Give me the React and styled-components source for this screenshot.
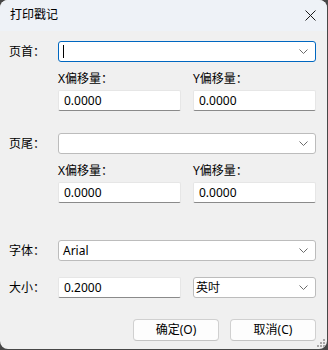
import styled, { createGlobalStyle } from "styled-components";

const GlobalStyle = createGlobalStyle`
  html, body {
    margin: 0;
    padding: 0;
    background: #474747;
  }
  body {
    font-family: "Segoe UI", "Noto Sans", "Noto Sans CJK SC", sans-serif;
    font-size: 12px;
    color: #000;
  }
`;

const Window = styled.div`
  width: 327px;
  height: 349px;
  background: #f0f0f0;
  border-radius: 8px;
  overflow: hidden;
  display: flex;
  flex-direction: column;
  position: relative;
`;

const TitleBar = styled.div`
  height: 31px;
  flex: none;
  background: #eef2f7;
  display: flex;
  align-items: center;
  justify-content: space-between;
  padding: 0 11px 1px 10px;
  box-sizing: border-box;
`;

const Title = styled.div`
  font-size: 12px;
  line-height: 16px;
`;

const Content = styled.div`
  padding: 10px 11px 0 9px;
  display: flex;
  flex-direction: column;
`;

const FieldRow = styled.div`
  display: grid;
  grid-template-columns: 49px 1fr;
  align-items: center;
  margin-top: ${(p) => p.$top || 0}px;
`;

const Label = styled.div`
  line-height: 16px;
  white-space: nowrap;
`;

const Combo = styled.div`
  height: 21px;
  box-sizing: border-box;
  background: #fff;
  border: 1px solid ${(p) => (p.$focused ? "#0067c0" : "#bcbcbc")};
  border-radius: 3px;
  display: flex;
  align-items: center;
  justify-content: space-between;
  padding: 0 7px 0 ${(p) => p.$pad ?? 3}px;
`;

const ComboText = styled.span`
  line-height: 16px;
`;

const Caret = styled.span`
  display: inline-block;
  width: 1px;
  height: 13px;
  background: #000;
  margin-left: 1px;
`;

const OffsetGrid = styled.div`
  margin-left: 49px;
  display: grid;
  grid-template-columns: 123px 123px;
  column-gap: 12px;
  padding-top: 9px;
`;

const OffsetCell = styled.div`
  display: flex;
  flex-direction: column;
  gap: 3px;
`;

const TextBox = styled.div`
  height: 21px;
  box-sizing: border-box;
  background: #fff;
  border: 1px solid #e6e6e6;
  border-bottom: 1px solid #8a8a8a;
  border-radius: 2px;
  display: flex;
  align-items: center;
  padding-left: 5px;
  line-height: 16px;
`;

const SizeFields = styled.div`
  display: grid;
  grid-template-columns: 123px 123px;
  column-gap: 12px;
  align-items: center;
`;

const ButtonBar = styled.div`
  display: flex;
  justify-content: flex-end;
  gap: 11px;
  margin-top: 21px;
`;

const Button = styled.button`
  width: 86px;
  height: 22px;
  box-sizing: border-box;
  background: #fdfdfd;
  border: 1px solid #d0d0d0;
  border-bottom-color: #c4c4c4;
  border-radius: 4px;
  font: inherit;
  color: #000;
  padding: 0;
  line-height: 16px;
`;

const Grip = styled.svg`
  position: absolute;
  right: 1px;
  bottom: 1px;
`;

const Chevron = () => (
  <svg width="9" height="5" viewBox="0 0 9 5">
    <path d="M0.5 0.5 L4.5 4.5 L8.5 0.5" fill="none" stroke="#6b6b6b" strokeWidth="1" />
  </svg>
);

const CloseIcon = () => (
  <svg width="11" height="11" viewBox="0 0 11 11">
    <path d="M0.5 0.5 L10.5 10.5 M10.5 0.5 L0.5 10.5" stroke="#1a1a1a" strokeWidth="1" />
  </svg>
);

const OffsetFields = () => (
  <OffsetGrid>
    <OffsetCell>
      <Label>X偏移量：</Label>
      <TextBox>0.0000</TextBox>
    </OffsetCell>
    <OffsetCell>
      <Label>Y偏移量：</Label>
      <TextBox>0.0000</TextBox>
    </OffsetCell>
  </OffsetGrid>
);

const App = () => {
  return (
    <>
      <GlobalStyle />
      <Window>
        <TitleBar>
          <Title>打印戳记</Title>
          <CloseIcon />
        </TitleBar>
        <Content>
          <FieldRow>
            <Label>页首：</Label>
            <Combo $focused>
              <Caret />
              <Chevron />
            </Combo>
          </FieldRow>
          <OffsetFields />

          <FieldRow $top={22}>
            <Label>页尾：</Label>
            <Combo>
              <span />
              <Chevron />
            </Combo>
          </FieldRow>
          <OffsetFields />

          <FieldRow $top={37}>
            <Label>字体：</Label>
            <Combo $pad={4}>
              <ComboText>Arial</ComboText>
              <Chevron />
            </Combo>
          </FieldRow>

          <FieldRow $top={16}>
            <Label>大小：</Label>
            <SizeFields>
              <TextBox>0.2000</TextBox>
              <Combo $pad={2}>
                <ComboText>英吋</ComboText>
                <Chevron />
              </Combo>
            </SizeFields>
          </FieldRow>

          <ButtonBar>
            <Button>确定(O)</Button>
            <Button>取消(C)</Button>
          </ButtonBar>
        </Content>
        <Grip width="9" height="9" viewBox="0 0 9 9">
          <g fill="#a8a8a8">
            <rect x="6" y="0" width="2" height="2" />
            <rect x="3" y="3" width="2" height="2" />
            <rect x="6" y="3" width="2" height="2" />
            <rect x="0" y="6" width="2" height="2" />
            <rect x="3" y="6" width="2" height="2" />
            <rect x="6" y="6" width="2" height="2" />
          </g>
        </Grip>
      </Window>
    </>
  );
};

export default App;
